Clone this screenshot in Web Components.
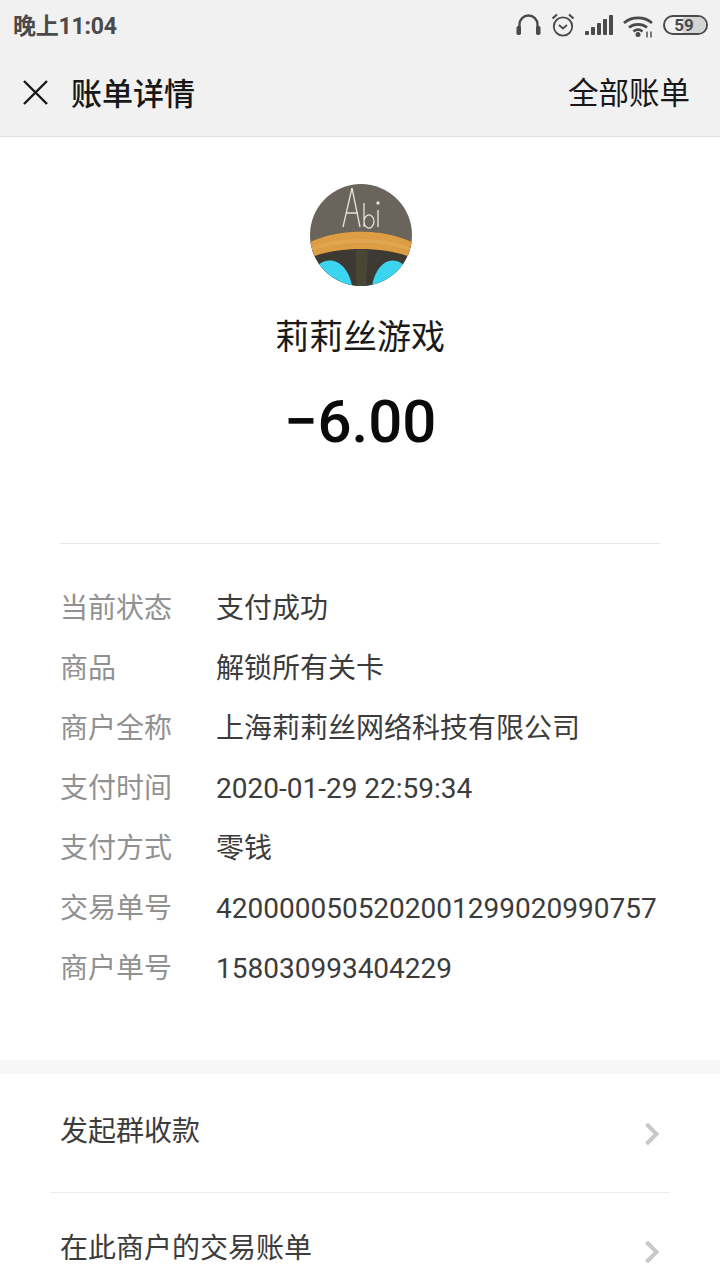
<!DOCTYPE html>
<html lang="zh">
<head>
<meta charset="utf-8">
<style>
html, body { margin: 0; background: #fff; }
body { width: 720px; height: 1280px; overflow: hidden; font-family: Roboto, "Noto Sans CJK SC", sans-serif; }
</style>
</head>
<body>
<bill-page>
    <status-bar slot="top" time="晚上11:04" battery="59"></status-bar>
    <bill-header slot="top" title="账单详情" action="全部账单"></bill-header>
    <merchant-summary name="莉莉丝游戏" amount="−6.00"></merchant-summary>
    <bill-details>
        <detail-row label="当前状态">支付成功</detail-row>
        <detail-row label="商品">解锁所有关卡</detail-row>
        <detail-row label="商户全称">上海莉莉丝网络科技有限公司</detail-row>
        <detail-row label="支付时间" numeric>2020-01-29 22:59:34</detail-row>
        <detail-row label="支付方式">零钱</detail-row>
        <detail-row label="交易单号" numeric>4200000505202001299020990757</detail-row>
        <detail-row label="商户单号" numeric>158030993404229</detail-row>
    </bill-details>
    <link-list>
        <link-row style="--row-height:119px;--text-lift:9px;--arrow-drop:2px">发起群收款</link-row>
        <link-row last style="--row-height:118px;--text-lift:12px;--arrow-drop:0px">在此商户的交易账单</link-row>
    </link-list>
</bill-page>

<script>
class BillPage extends HTMLElement {
    constructor() {
        super();
        this.attachShadow({ mode: 'open' });
        this.shadowRoot.innerHTML = `
            <style>
                :host { display: block; width: 720px; height: 1280px; overflow: hidden; background: #fff; }
            </style>
            <slot name="top"></slot>
            <slot></slot>
        `;
    }
}

class StatusBar extends HTMLElement {
    constructor() {
        super();
        this.attachShadow({ mode: 'open' });
    }

    connectedCallback() {
        this.shadowRoot.innerHTML = `
            <style>
                :host {
                    display: flex;
                    align-items: center;
                    justify-content: space-between;
                    height: 50px;
                    padding: 0 12px 0 13px;
                    background: #f1f1f1;
                    color: #4a4a4a;
                }
                .time { font-size: 23px; font-weight: 700; letter-spacing: -0.2px; margin-bottom: 2px; }
                .icons { display: flex; align-items: center; gap: 10px; }
                svg { display: block; }
                .battery {
                    position: relative;
                    box-sizing: border-box;
                    width: 45px;
                    height: 20px;
                    border: 2px solid #4a4a4a;
                    border-radius: 10px;
                    overflow: hidden;
                    text-align: center;
                }
                .level { position: absolute; left: 18px; top: 0; bottom: 0; right: 0; background: #d4d4d4; }
                .num { position: relative; font-size: 17px; font-weight: 700; line-height: 16px; display: block; margin-left: -3px; }
            </style>
            <span class="time">${this.getAttribute('time')}</span>
            <span class="icons">
                <svg width="25" height="22" viewBox="0 0 25 22" fill="none" stroke="#4a4a4a" stroke-width="2.4">
                    <path d="M3.500 17V10.500a9 9 0 0 1 18 0V17"/>
                    <rect x="0.500" y="12" width="4.500" height="9" rx="1.800" fill="#4a4a4a" stroke="none"/>
                    <rect x="20" y="12" width="4.500" height="9" rx="1.800" fill="#4a4a4a" stroke="none"/>
                </svg>
                <svg width="24" height="24" viewBox="0 0 24 24" fill="none" stroke="#4a4a4a" stroke-width="1.800">
                    <circle cx="12" cy="13.500" r="9.200"/>
                    <path d="M8 12l4 3.500 4-3.500"/>
                    <path d="M1.500 5.500L6 1.500M22.500 5.500L18 1.500" stroke-width="2.200"/>
                </svg>
                <svg width="28" height="20" viewBox="0 0 28 20" fill="#4a4a4a">
                    <rect x="0" y="16" width="4" height="4" rx="1"/>
                    <rect x="6" y="12" width="4" height="8" rx="1"/>
                    <rect x="12" y="8" width="4" height="12" rx="1"/>
                    <rect x="18" y="4" width="4" height="16" rx="1"/>
                    <rect x="24" y="0" width="4" height="20" rx="1"/>
                </svg>
                <svg width="30" height="22" viewBox="0 0 30 22" fill="none" stroke="#4a4a4a" stroke-width="2.800" style="margin-top:3px">
                    <path d="M1 7c7.800-6.800 20.200-6.800 28 0"/>
                    <path d="M6 11.500c5-4.200 13-4.200 18 0"/>
                    <path d="M10.500 15.500c2.700-2.200 6.300-2.200 9 0"/>
                    <circle cx="15" cy="18.500" r="2.500" fill="#4a4a4a" stroke="none"/>
                    <path d="M24 15.500v6M28 15.500v6" stroke-width="1.400"/>
                </svg>
                <span class="battery"><span class="level"></span><span class="num">${this.getAttribute('battery')}</span></span>
            </span>
        `;
    }
}

class BillHeader extends HTMLElement {
    constructor() {
        super();
        this.attachShadow({ mode: 'open' });
    }

    connectedCallback() {
        this.shadowRoot.innerHTML = `
            <style>
                :host {
                    display: flex;
                    align-items: center;
                    box-sizing: border-box;
                    height: 87px;
                    padding: 0 30px 0 23px;
                    background: #f1f1f1;
                    border-bottom: 1px solid #e0e0e0;
                    color: #181818;
                    font-family: "Noto Sans CJK SC", sans-serif;
                }
                svg { display: block; margin-bottom: 2px; }
                .title { margin: 0 0 4px 23px; font-size: 31px; font-weight: 500; flex: 1; }
                .action { margin-bottom: 4px; font-size: 30.500px; }
            </style>
            <svg width="25" height="25" viewBox="0 0 25 25" stroke="#181818" stroke-width="2.400" fill="none">
                <path d="M1 1l23 23M24 1L1 24"/>
            </svg>
            <span class="title">${this.getAttribute('title')}</span>
            <span class="action">${this.getAttribute('action')}</span>
        `;
    }
}

class MerchantSummary extends HTMLElement {
    constructor() {
        super();
        this.attachShadow({ mode: 'open' });
    }

    connectedCallback() {
        this.shadowRoot.innerHTML = `
            <style>
                :host {
                    display: flex;
                    flex-direction: column;
                    align-items: center;
                    box-sizing: border-box;
                    height: 407px;
                    margin: 0 60px;
                    padding-top: 47px;
                    border-bottom: 1px solid #e6e6e6;
                    color: #111;
                }
                svg { display: block; margin-left: 2px; }
                .name {
                    margin-top: 25px;
                    height: 48px;
                    line-height: 48px;
                    font-size: 34px;
                    font-family: "Noto Sans CJK SC", sans-serif;
                    color: #1a1a1a;
                }
                .amount {
                    margin-top: 28px;
                    height: 70px;
                    line-height: 70px;
                    font-size: 60px;
                    font-weight: 500;
                    font-family: Roboto, sans-serif;
                    color: #0a0a0a;
                }
            </style>
            <svg width="102" height="102" viewBox="0 0 102 102">
                <defs><clipPath id="round"><circle cx="51" cy="51" r="51"/></clipPath></defs>
                <g clip-path="url(#round)">
                    <rect width="102" height="102" fill="#69645c"/>
                    <path d="M0 58C30 44 72 44 102 58V102H0Z" fill="#3c3a33"/>
                    <path d="M0 58C30 44 72 44 102 58V74C76 62 26 62 0 74Z" fill="#dc9d44"/>
                    <path d="M0 64C30 52 72 52 102 64V67C72 56 30 56 0 67Z" fill="#eab566" opacity=".4"/>
                    <path d="M46 66C50 65 54 65 58 66L56 102H46Z" fill="#4a4535"/>
                    <path d="M8 81C22 70 38 80 42 102H8Z" fill="#3cd5f0"/>
                    <path d="M94 81C80 70 66 80 62 102H94Z" fill="#3cd5f0"/>
                    <path d="M42 4L33 43M42 4L50 43M35.500 29H48" stroke="#e4e2df" stroke-width="1.300" fill="none"/>
                    <path d="M54 19V43M54 37a5 6.500 0 1 1 0 1" stroke="#e4e2df" stroke-width="1.300" fill="none"/>
                    <path d="M68 26V43" stroke="#e4e2df" stroke-width="1.400"/>
                    <circle cx="68" cy="19" r="1.700" fill="#e4e2df"/>
                </g>
            </svg>
            <span class="name">${this.getAttribute('name')}</span>
            <span class="amount">${this.getAttribute('amount')}</span>
        `;
    }
}

class BillDetails extends HTMLElement {
    constructor() {
        super();
        this.attachShadow({ mode: 'open' });
        this.shadowRoot.innerHTML = `
            <style>
                :host {
                    display: block;
                    box-sizing: border-box;
                    height: 530px;
                    padding: 34px 0 0 60px;
                    border-bottom: 14px solid #f7f7f7;
                }
            </style>
            <slot></slot>
        `;
    }
}

class DetailRow extends HTMLElement {
    constructor() {
        super();
        this.attachShadow({ mode: 'open' });
    }

    connectedCallback() {
        this.shadowRoot.innerHTML = `
            <style>
                :host {
                    display: flex;
                    align-items: center;
                    height: 60px;
                    font-size: 28px;
                    white-space: nowrap;
                }
                .label { width: 156px; margin-bottom: 4px; color: #919191; font-family: "Noto Sans CJK SC", sans-serif; }
                .value { margin-bottom: 4px; color: #3c3c3c; font-family: Roboto, "Noto Sans CJK SC", sans-serif; }
                :host([numeric]) .value { margin-bottom: 0; }
            </style>
            <span class="label">${this.getAttribute('label')}</span>
            <span class="value"><slot></slot></span>
        `;
    }
}

class LinkList extends HTMLElement {
    constructor() {
        super();
        this.attachShadow({ mode: 'open' });
        this.shadowRoot.innerHTML = `
            <style>
                :host { display: block; padding: 0 50px; }
            </style>
            <slot></slot>
        `;
    }
}

class LinkRow extends HTMLElement {
    constructor() {
        super();
        this.attachShadow({ mode: 'open' });
    }

    connectedCallback() {
        this.shadowRoot.innerHTML = `
            <style>
                :host {
                    display: flex;
                    align-items: center;
                    justify-content: space-between;
                    box-sizing: border-box;
                    height: var(--row-height, 118px);
                    padding: 0 10px;
                    font-size: 28px;
                    font-family: "Noto Sans CJK SC", sans-serif;
                    color: #3c3c3c;
                    border-bottom: 1px solid #ececec;
                }
                :host([last]) { border-bottom: none; }
                span { margin-bottom: var(--text-lift, 0); }
                svg { display: block; margin-top: var(--arrow-drop, 0); }
            </style>
            <span><slot></slot></span>
            <svg width="16" height="24" viewBox="0 0 16 24" fill="none" stroke="#c8c8cc" stroke-width="4">
                <path d="M2.500 2l10 10-10 10"/>
            </svg>
        `;
    }
}

customElements.define('bill-page', BillPage);
customElements.define('status-bar', StatusBar);
customElements.define('bill-header', BillHeader);
customElements.define('merchant-summary', MerchantSummary);
customElements.define('bill-details', BillDetails);
customElements.define('detail-row', DetailRow);
customElements.define('link-list', LinkList);
customElements.define('link-row', LinkRow);
</script>
</body>
</html>
